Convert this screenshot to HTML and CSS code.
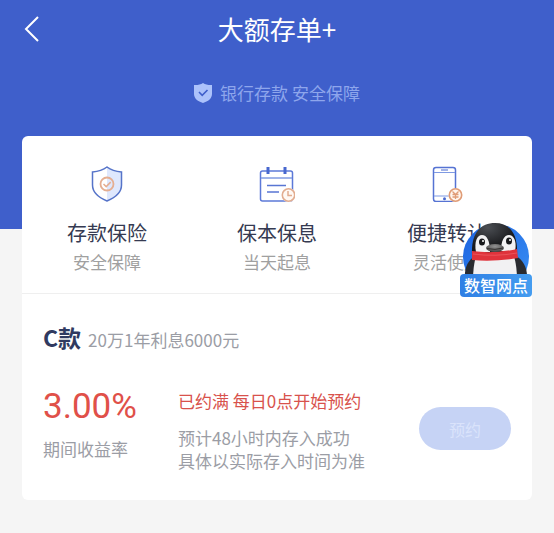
FILE: index.html
```html
<!DOCTYPE html>
<html lang="zh-CN">
<head>
    <meta charset="UTF-8">
    <meta name="viewport" content="width=device-width, initial-scale=1.0">
    <title>大额存单+</title>
    <link rel="stylesheet" href="styles.css">
</head>
<body>

<header class="hero">
    <div class="nav">
        <button class="back" type="button" aria-label="返回">
            <svg width="16" height="28" viewBox="0 0 16 28" fill="none" stroke="#fff" stroke-width="2">
                <path d="M14 2L2 14l12 12"/>
            </svg>
        </button>
        <h1 class="title">大额存单+</h1>
    </div>
    <p class="tagline">
        <svg width="18" height="20" viewBox="0 0 18 20">
            <path d="M9 0C6.500 1.700 3.500 2.200 0 2v9c0 4.500 4 7.500 9 9 5-1.500 9-4.500 9-9V2C14.500 2.200 11.500 1.700 9 0z" fill="#acc2fb"/>
            <path d="M5 9l3.200 3.300L13.500 7" fill="none" stroke="#3f5fcb" stroke-width="1.600"/>
        </svg>
        银行存款 安全保障
    </p>
</header>

<main class="card">
    <ul class="features">
        <li class="feature">
            <!-- 盾牌 -->
            <svg width="36" height="36" viewBox="0 0 36 36" fill="none">
                <path d="M18 1c4 3 9 4.500 14.500 5v13c0 8-6 12.500-14.500 16z" fill="#dfe8fd"/>
                <path d="M18 1C14 4 9 5.500 3.500 6v13c0 8 6 12.500 14.500 16 8.500-3.500 14.500-8 14.500-16V6C27 5.500 22 4 18 1z" stroke="#5674c9" stroke-width="1.500"/>
                <circle cx="18" cy="18" r="6.500" stroke="#e5ae91" stroke-width="1.800"/>
                <path d="M14.500 18l2.700 2.600 4.500-4.500" stroke="#e5ae91" stroke-width="1.500"/>
            </svg>
            <h2 class="feature-name">存款保险</h2>
            <p class="feature-note">安全保障</p>
        </li>
        <li class="feature">
            <!-- 日历 -->
            <svg width="36" height="36" viewBox="0 0 36 36" fill="none">
                <rect x="1.500" y="5" width="32" height="30" rx="2" stroke="#5c79d8" stroke-width="1.500"/>
                <path d="M2 12h31" stroke="#819be2" stroke-width="1.500"/>
                <path d="M9 1v7M26 1v7" stroke="#4868cf" stroke-width="3"/>
                <path d="M8 19.500h19M8 26h12" stroke="#5876d3" stroke-width="1.500"/>
                <circle cx="29.500" cy="29" r="7" fill="#fff"/>
                <circle cx="29.500" cy="29" r="6.200" fill="#fff9f4" stroke="#e2ad90" stroke-width="1.600"/>
                <path d="M29 25v4.500h4" stroke="#e2ad90" stroke-width="1.500"/>
            </svg>
            <h2 class="feature-name">保本保息</h2>
            <p class="feature-note">当天起息</p>
        </li>
        <li class="feature">
            <!-- 手机 -->
            <svg width="36" height="36" viewBox="0 0 36 36" fill="none">
                <rect x="4.500" y="1.500" width="22" height="34" rx="2.500" stroke="#5673d3" stroke-width="1.500"/>
                <path d="M5 6.500h21M5 30h21" stroke="#7f9ae3" stroke-width="1.200"/>
                <path d="M12 4h7" stroke="#4868cf"/>
                <circle cx="15.500" cy="32.700" r="1.500" fill="#4868cf"/>
                <circle cx="26.500" cy="29" r="7" fill="#fff"/>
                <circle cx="26.500" cy="29" r="6.200" fill="#fff6ee" stroke="#e09c76" stroke-width="1.600"/>
                <path d="M23.500 25.500l3 3 3-3M23.500 28.500h6M23.500 31h6M26.500 28.500V33" stroke="#e09c76" stroke-width="1.300"/>
            </svg>
            <h2 class="feature-name">便捷转让</h2>
            <p class="feature-note">灵活使用</p>
        </li>
    </ul>

    <section class="plan">
        <div class="plan-head">
            <h2 class="plan-name">C款</h2>
            <span class="muted">20万1年利息6000元</span>
        </div>
        <div class="plan-body">
            <div class="rate">
                <p class="rate-value">3.00%</p>
                <p class="muted">期间收益率</p>
            </div>
            <div class="detail">
                <p class="status">已约满 每日0点开始预约</p>
                <p class="muted">预计48小时内存入成功<br>具体以实际存入时间为准</p>
            </div>
            <button class="reserve" type="button" disabled>预约</button>
        </div>
    </section>

    <!-- 悬浮入口 -->
    <a class="branch" href="#">
        <svg class="penguin" width="68" height="58" viewBox="0 0 68 58">
            <defs>
                <linearGradient id="disc" x1="0" y1="0" x2="1" y2="1">
                    <stop offset="0" stop-color="#1c62df"/>
                    <stop offset="1" stop-color="#3a91f5"/>
                </linearGradient>
                <radialGradient id="head" cx=".35" cy=".15" r=".6">
                    <stop offset="0" stop-color="#4b4e53"/>
                    <stop offset="1" stop-color="#1a1b1e"/>
                </radialGradient>
                <radialGradient id="beak" cx=".5" cy=".3" r=".7">
                    <stop offset="0" stop-color="#929292"/>
                    <stop offset="1" stop-color="#444"/>
                </radialGradient>
            </defs>
            <circle cx="34" cy="35" r="33" fill="url(#disc)"/>
            <!-- 翅膀和身体 -->
            <path d="M13 34C6 38 2 46 3 58h12l4-20zM54 34c7 4 12 12 11 24H52l-3-20z" fill="#292b30"/>
            <path d="M14 34h38c2 7 3 15 3 24H11c0-9 1-17 3-24z" fill="#f1f1f3"/>
            <!-- 头 -->
            <path d="M10 32C9 12 18 1 33 1s23 11 22 31z" fill="url(#head)"/>
            <path d="M14 30c-2-10 1-17 6-17 5 0 8 6 8 17z" fill="#f2f2f3"/>
            <path d="M53 29c2-9-1-16-6-16-5 0-8 6-8 16z" fill="#f2f2f3"/>
            <ellipse cx="20" cy="20" rx="3" ry="3.500" fill="#17181b"/>
            <ellipse cx="47" cy="19" rx="3" ry="3.500" fill="#17181b"/>
            <circle cx="21" cy="19" r="1" fill="#fff"/>
            <circle cx="48" cy="18" r="1" fill="#fff"/>
            <!-- 围巾 -->
            <path d="M10 29q22 3 45-2l1 9q-24 4-46 2z" fill="#df333c"/>
            <path d="M11 32q22 3 44-1" fill="none" stroke="#ea535a"/>
            <ellipse cx="33" cy="26" rx="9" ry="4" fill="url(#beak)"/>
            <path d="M25 26.500q8 2 16-.5" fill="none" stroke="#33302f"/>
        </svg>
        <span class="branch-label">数智网点</span>
    </a>
</main>

</body>
</html>
```

FILE: styles.css
```css
* {
    box-sizing: border-box;
}
body {
    margin: 0;
    background-color: #f5f5f5;
    font-family: "Noto Sans CJK SC", sans-serif;
    font-size: 17px;
    line-height: 23px;
}
h1, h2, p, ul {
    margin: 0;
    padding: 0;
}
svg {
    display: block;
    flex: none;
}
button {
    border: none;
    font-family: inherit;
}

/* ヘッダー */
.hero {
    padding: 9px 22px 124px;
    background-color: #3f5fcb;
}
.nav {
    display: grid;
    grid-template-columns: 40px 1fr 40px;
    align-items: center;
    height: 40px;
}
.back {
    padding: 0 2px;
    background: none;
    cursor: pointer;
}
.title {
    color: #fff;
    font-size: 26px;
    font-weight: 400;
    line-height: 40px;
    text-align: center;
}
.tagline {
    display: flex;
    justify-content: center;
    align-items: center;
    gap: 8px;
    margin-top: 32px;
    line-height: 24px;
    color: #8ea6ec;
}

.card {
    position: relative;
    margin: -93px 22px 32px;
    background-color: #fff;
    border-radius: 6px;
}

.features {
    display: grid;
    grid-template-columns: repeat(3, 1fr);
    padding: 30px 0 17px;
    border-bottom: 1px solid #efefef;
    list-style: none;
}
.feature {
    display: flex;
    flex-direction: column;
    align-items: center;
}
.feature-name {
    margin-top: 16px;
    color: #353a51;
    font-size: 20px;
    font-weight: 400;
    line-height: 30px;
}
.feature-note {
    color: #a0a0a0;
    line-height: 28px;
}

.plan {
    padding: 28px 21px;
}
.plan-head {
    display: flex;
    align-items: baseline;
    gap: 7px;
}
.plan-name {
    color: #303a60;
    font-size: 23px;
    font-weight: 700;
    line-height: 30px;
}
.muted {
    color: #9b9da5;
}
.plan-body {
    display: flex;
    align-items: flex-start;
    margin-top: 33px;
}
.rate {
    width: 135px;
}
.rate-value {
    margin-bottom: 8px;
    color: #e05049;
    font-family: Roboto, sans-serif;
    font-size: 35px;
    line-height: 44px;
}
.detail {
    flex: 1;
    padding-top: 4px;
}
.status {
    margin-bottom: 14px;
    color: #d8524c;
}
.reserve {
    align-self: center;
    width: 92px;
    height: 43px;
    border-radius: 22px;
    background-color: #c6d3f5;
    color: #dae3fb;
    font-size: 16px;
}

.branch {
    position: absolute;
    top: 86px;
    right: 0;
    width: 72px;
    color: #fff;
    text-decoration: none;
}
.penguin {
    margin: 0 auto -6px;
}
.branch-label {
    display: block;
    position: relative;
    border-radius: 4px;
    background: linear-gradient(90deg, #2f7fe4, #449cf0);
    font-size: 16px;
    font-weight: 500;
    text-align: center;
}
```
